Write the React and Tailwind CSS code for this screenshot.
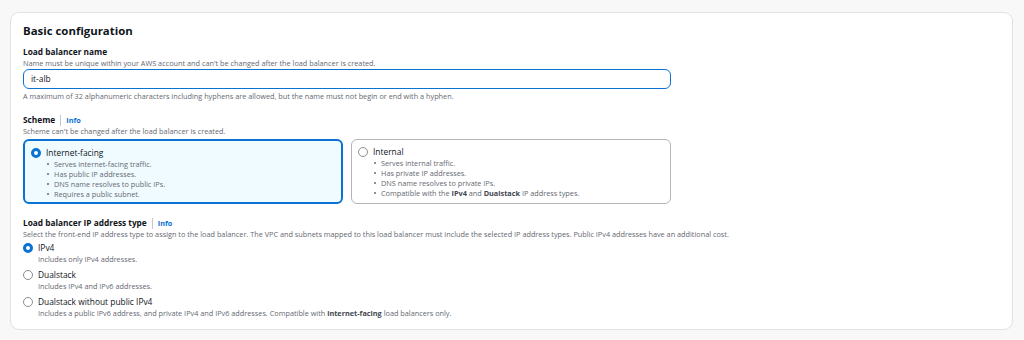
import React from 'react';

const FONT = { fontFamily: '"Open Sans", "Noto Sans", sans-serif' };

const Radio = ({ checked }) => (
  <span
    className={`mt-[1px] h-[10px] w-[10px] shrink-0 rounded-full bg-white ${
      checked ? 'border-[3px] border-[#0972d3]' : 'border border-[#8c8c94]'
    }`}
  />
);

const Label = ({ children, info }) => (
  <div className="flex items-center text-[8.3px] font-bold leading-[12px] text-[#0f141a]">
    {children}
    {info && (
      <>
        <span className="mx-[5px] h-[11px] w-px bg-[#c6c6cd]" />
        <span className="text-[7.3px] font-bold text-[#0972d3]">Info</span>
      </>
    )}
  </div>
);

const Hint = ({ children, className = '' }) => (
  <div className={`text-[7.3px] leading-[10px] text-[#656871] ${className}`}>{children}</div>
);

const Tile = ({ checked, title, items }) => (
  <div
    className={`flex h-[65px] w-[320px] gap-[5px] rounded-[6px] pl-[6px] pt-[6px] ${
      checked ? 'border-2 border-[#0972d3] bg-[#f0fbff]' : 'border border-[#b4b4bb] bg-white'
    }`}
  >
    <Radio checked={checked} />
    <div>
      <div className="text-[8.4px] leading-[12px] text-[#0f141a]">{title}</div>
      <ul className="pl-[1px]">
        {items.map((it, i) => (
          <li key={i} className="flex items-center gap-[5px] text-[7.3px] leading-[10px] text-[#656871]">
            <span className="h-[2px] w-[2px] rounded-full bg-[#656871]" />
            <span>{it}</span>
          </li>
        ))}
      </ul>
    </div>
  </div>
);

const Option = ({ checked, title, desc }) => (
  <div className="flex gap-[5px]">
    <Radio checked={checked} />
    <div>
      <div className="text-[8.4px] font-medium leading-[12px] text-[#0f141a]">{title}</div>
      <Hint>{desc}</Hint>
    </div>
  </div>
);

export default function App() {
  return (
    <div className="h-[340px] w-[1024px] bg-[#f8f8f8] pl-[10px] pr-[11px] pt-[12px]" style={FONT}>
      <div className="h-[318px] rounded-[9px] border border-[#e1e1e3] bg-white px-[12px] pt-[9px]">
        <h2 className="text-[11.4px] font-bold leading-[17px] text-[#0f141a]">Basic configuration</h2>

        <div className="mt-[7px]">
          <Label>Load balancer name</Label>
          <Hint>Name must be unique within your AWS account and can't be changed after the load balancer is created.</Hint>
          <div className="mt-[1px] flex h-[20px] w-[648px] items-center rounded-[6px] border border-[#0972d3] px-[7px] text-[8.4px] text-[#0f141a]">
            it-alb
          </div>
          <Hint className="mt-[2px]">
            A maximum of 32 alphanumeric characters including hyphens are allowed, but the name must not begin or end with a hyphen.
          </Hint>
        </div>

        <div className="mt-[13px]">
          <Label info>Scheme</Label>
          <Hint>Scheme can't be changed after the load balancer is created.</Hint>
          <div className="mt-[3px] flex gap-[8px]">
            <Tile
              checked
              title="Internet-facing"
              items={[
                'Serves internet-facing traffic.',
                'Has public IP addresses.',
                'DNS name resolves to public IPs.',
                'Requires a public subnet.',
              ]}
            />
            <Tile
              title="Internal"
              items={[
                'Serves internal traffic.',
                'Has private IP addresses.',
                'DNS name resolves to private IPs.',
                <>
                  Compatible with the <b className="text-[#414750]">IPv4</b> and{' '}
                  <b className="text-[#414750]">Dualstack</b> IP address types.
                </>,
              ]}
            />
          </div>
        </div>

        <div className="mt-[13px]">
          <Label info>Load balancer IP address type</Label>
          <Hint>
            Select the front-end IP address type to assign to the load balancer. The VPC and subnets mapped to this load balancer must include the selected IP address types. Public IPv4 addresses have an additional cost.
          </Hint>
          <div className="mt-[3px] flex flex-col gap-[5px]">
            <Option checked title="IPv4" desc="Includes only IPv4 addresses." />
            <Option title="Dualstack" desc="Includes IPv4 and IPv6 addresses." />
            <Option
              title="Dualstack without public IPv4"
              desc={
                <>
                  Includes a public IPv6 address, and private IPv4 and IPv6 addresses. Compatible with{' '}
                  <b className="text-[#414750]">internet-facing</b> load balancers only.
                </>
              }
            />
          </div>
        </div>
      </div>
    </div>
  );
}
